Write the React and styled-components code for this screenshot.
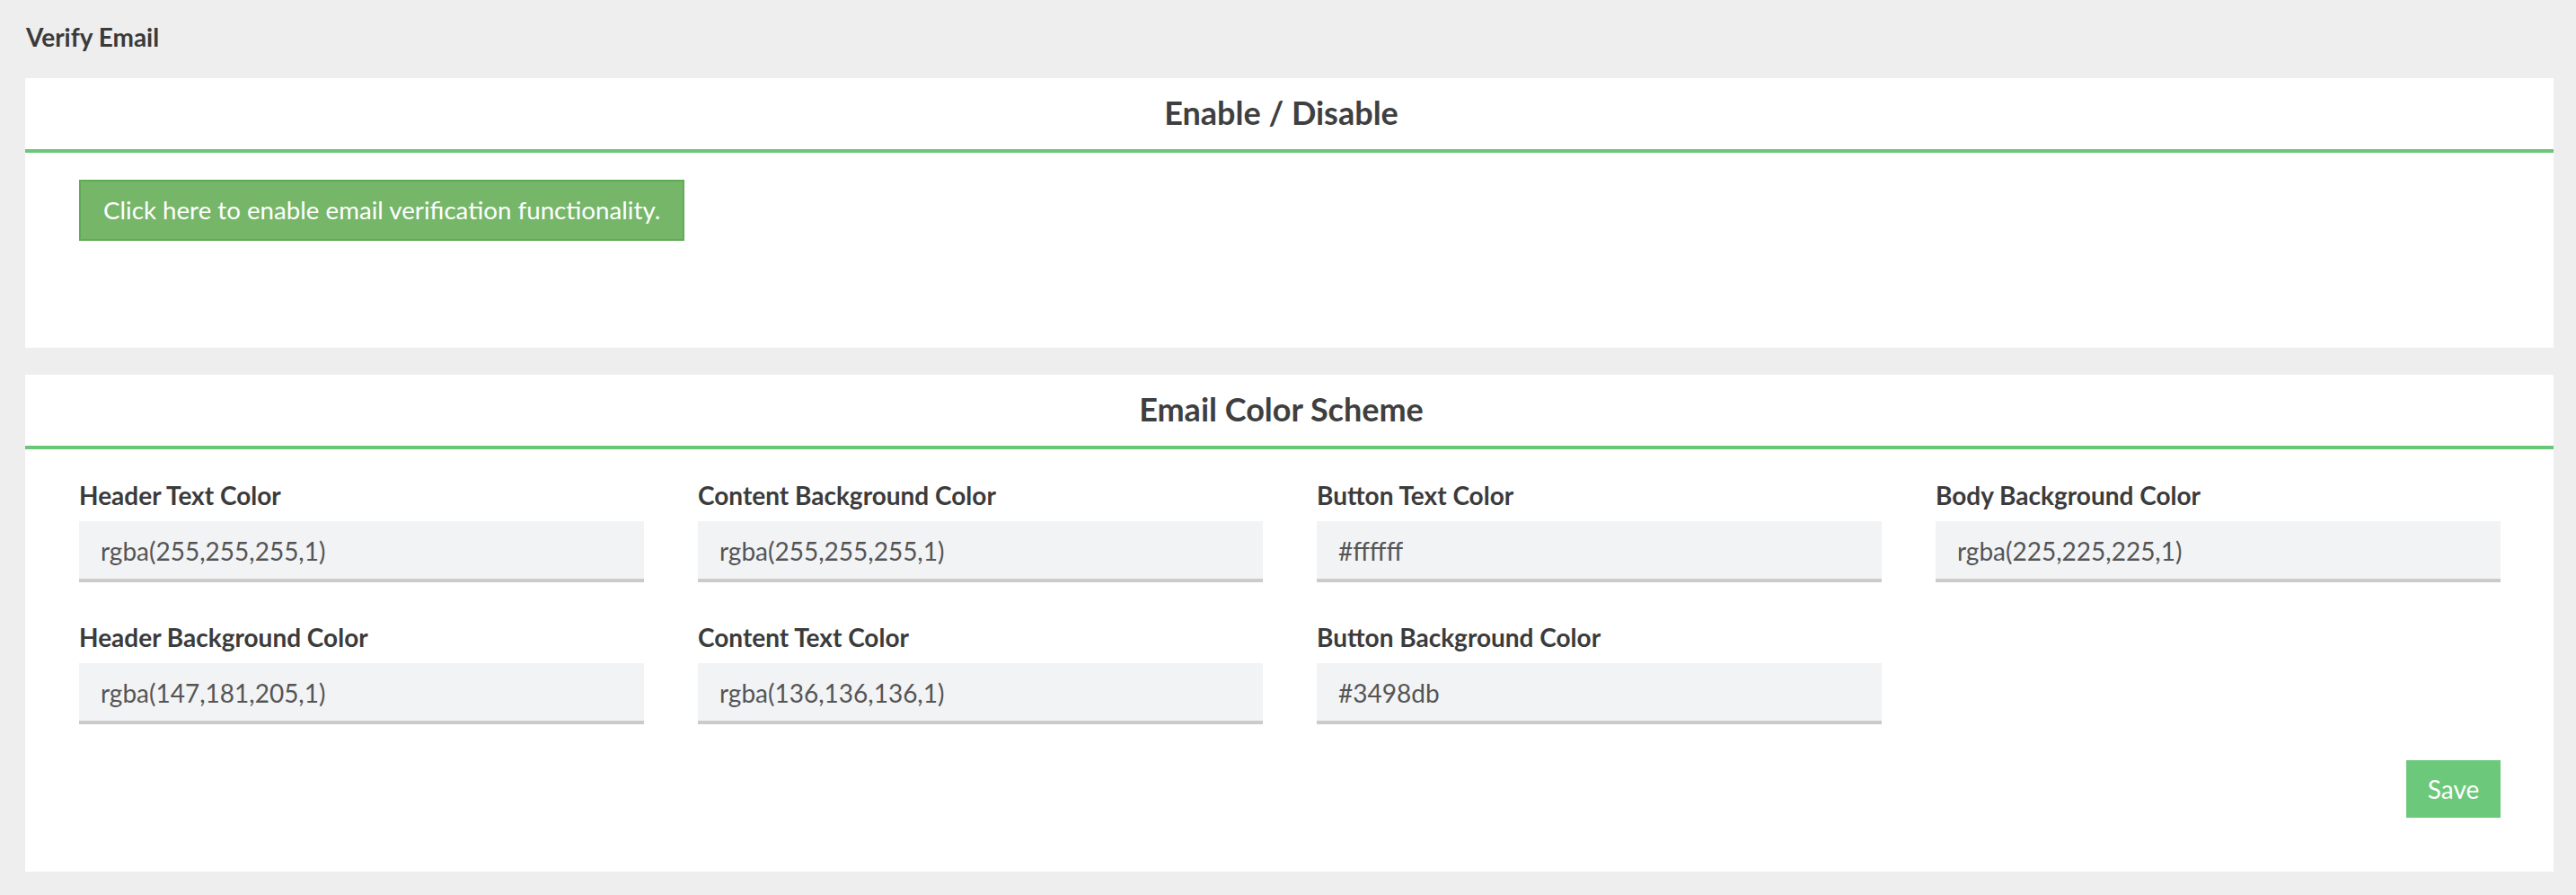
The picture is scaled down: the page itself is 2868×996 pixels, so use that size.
import React, { useState } from 'react';
import styled, { createGlobalStyle } from 'styled-components';

const GlobalStyle = createGlobalStyle`
  body {
    margin: 0;
    background: #eeeeee;
    font-family: Lato, "Open Sans", sans-serif;
    color: #3d3d3d;
  }
`;

const Page = styled.div`
  padding: 21px 25px 26px 28px;
`;

const PageTitle = styled.h1`
  margin: 0 0 26px 1px;
  font-size: 28px;
  line-height: 40px;
  font-weight: 700;
  color: #3a3a3a;
`;

const Card = styled.section`
  background: #ffffff;
  margin-bottom: 30px;
  &:last-child {
    margin-bottom: 0;
  }
`;

const CardHeader = styled.h2`
  margin: 0;
  height: 79px;
  padding-right: 18px;
  line-height: 77px;
  text-align: center;
  font-size: 36px;
  font-weight: 700;
  color: #3f3f3f;
  border-bottom: 4px solid #6cc679;
`;

const CardBody = styled.div`
  padding: ${p => p.$pad || '30px 60px'};
`;

const EnableButton = styled.button`
  font-family: inherit;
  font-size: 27.7px;
  line-height: 36px;
  padding: 14px 25px;
  color: #ffffff;
  background: #76b669;
  border: 2px solid #5fab56;
  cursor: pointer;
`;

const FieldGrid = styled.div`
  display: grid;
  grid-template-columns: repeat(4, 1fr);
  column-gap: 60px;
  row-gap: 43px;
`;

const Field = styled.label`
  display: flex;
  flex-direction: column;
  gap: 11px;
`;

const FieldLabel = styled.span`
  font-size: 28px;
  line-height: 36px;
  font-weight: 700;
  color: #3b3b3b;
`;

const ColorInput = styled.input`
  box-sizing: border-box;
  width: 100%;
  height: 68px;
  padding: 2px 24px 0;
  border: none;
  border-bottom: 4px solid #cbcbcc;
  background: #f2f3f5;
  font-family: inherit;
  font-size: 28px;
  color: #555555;
  outline: none;
`;

const Actions = styled.div`
  display: flex;
  justify-content: flex-end;
  margin-top: 40px;
`;

const SaveButton = styled.button`
  width: 105px;
  height: 64px;
  border: none;
  background: #6cc87a;
  color: #ffffff;
  font-family: inherit;
  font-size: 28px;
  cursor: pointer;
`;

const defaults = [
  { key: 'headerText', label: 'Header Text Color', value: 'rgba(255,255,255,1)' },
  { key: 'contentBg', label: 'Content Background Color', value: 'rgba(255,255,255,1)' },
  { key: 'buttonText', label: 'Button Text Color', value: '#ffffff' },
  { key: 'bodyBg', label: 'Body Background Color', value: 'rgba(225,225,225,1)' },
  { key: 'headerBg', label: 'Header Background Color', value: 'rgba(147,181,205,1)' },
  { key: 'contentText', label: 'Content Text Color', value: 'rgba(136,136,136,1)' },
  { key: 'buttonBg', label: 'Button Background Color', value: '#3498db' },
];

export default function App() {
  const [colors, setColors] = useState(
    Object.fromEntries(defaults.map(f => [f.key, f.value]))
  );

  return (
    <Page>
      <GlobalStyle />
      <PageTitle>Verify Email</PageTitle>

      <Card>
        <CardHeader>Enable / Disable</CardHeader>
        <CardBody $pad="30px 60px 119px">
          <EnableButton>Click here to enable email verification functionality.</EnableButton>
        </CardBody>
      </Card>

      <Card>
        <CardHeader>Email Color Scheme</CardHeader>
        <CardBody $pad="33px 59px 60px 60px">
          <FieldGrid>
            {defaults.map(f => (
              <Field key={f.key}>
                <FieldLabel>{f.label}</FieldLabel>
                <ColorInput
                  value={colors[f.key]}
                  onChange={e => setColors({ ...colors, [f.key]: e.target.value })}
                />
              </Field>
            ))}
          </FieldGrid>
          <Actions>
            <SaveButton>Save</SaveButton>
          </Actions>
        </CardBody>
      </Card>
    </Page>
  );
}
